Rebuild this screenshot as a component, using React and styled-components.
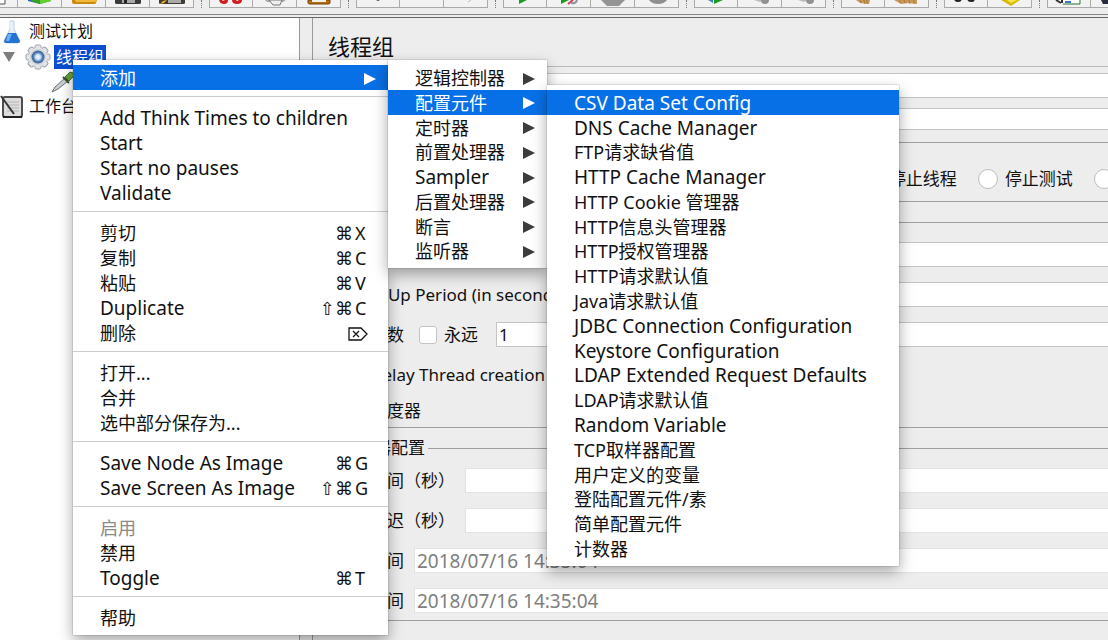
import React from "react";
import styled, { createGlobalStyle, css } from "styled-components";

const addItems = [
  "逻辑控制器",
  "配置元件",
  "定时器",
  "前置处理器",
  "Sampler",
  "后置处理器",
  "断言",
  "监听器",
];

const configItems = [
  "CSV Data Set Config",
  "DNS Cache Manager",
  "FTP请求缺省值",
  "HTTP Cache Manager",
  "HTTP Cookie 管理器",
  "HTTP信息头管理器",
  "HTTP授权管理器",
  "HTTP请求默认值",
  "Java请求默认值",
  "JDBC Connection Configuration",
  "Keystore Configuration",
  "LDAP Extended Request Defaults",
  "LDAP请求默认值",
  "Random Variable",
  "TCP取样器配置",
  "用户定义的变量",
  "登陆配置元件/素",
  "简单配置元件",
  "计数器",
];

const menuGroups = [
  [
    { label: "Add Think Times to children" },
    { label: "Start" },
    { label: "Start no pauses" },
    { label: "Validate" },
  ],
  [
    { label: "剪切", keys: "⌘", letter: "X" },
    { label: "复制", keys: "⌘", letter: "C" },
    { label: "粘贴", keys: "⌘", letter: "V" },
    { label: "Duplicate", keys: "⇧⌘", letter: "C" },
    { label: "删除", erase: true },
  ],
  [{ label: "打开..." }, { label: "合并" }, { label: "选中部分保存为..." }],
  [
    { label: "Save Node As Image", keys: "⌘", letter: "G" },
    { label: "Save Screen As Image", keys: "⇧⌘", letter: "G" },
  ],
  [
    { label: "启用", disabled: true },
    { label: "禁用" },
    { label: "Toggle", keys: "⌘", letter: "T" },
  ],
  [{ label: "帮助" }],
];

const tools = [
  ["new", "template", "open", "save", "saveAs"],
  ["cut", "copy", "paste"],
  ["expand", "collapse", "toggle"],
  ["start", "startNoPause", "stop", "shutdown"],
  ["remoteStart", "remoteStop", "remoteShutdown"],
  ["clear", "clearAll"],
  ["search", "searchReset"],
  ["functions", "help"],
];

const toolArt = {
  new: (
    <>
      <path d="M4 0h19v4H4z" fill="#fff" />
      <path d="M4 4h19V0" fill="none" stroke="#555" />
    </>
  ),
  template: (
    <>
      <path d="M2 0h12v4L2 1z" fill="#2463b8" />
      <path d="M5 0h20v1L14 4 5 1z" fill="#36a51c" />
      <path d="M14 0h11v1L14 4z" fill="#62cf35" />
    </>
  ),
  open: (
    <>
      <path d="M2 0h25l-1 3q0 1-2 1H4Q2 4 2 2z" fill="#c98a10" />
      <path d="M5 0h22l-1 2H6z" fill="#f0b93a" />
    </>
  ),
  save: (
    <>
      <path d="M1 0h26v3q0 1-2 1H3Q1 4 1 3z" fill="#3a3a3a" />
      <path d="M8 0h13v3H8z" fill="#a8a8a8" />
      <path d="M10 0h3v3h-3z" fill="#222" />
    </>
  ),
  saveAs: (
    <>
      <path d="M1 0h26v3q0 1-2 1H3Q1 4 1 3z" fill="#3f3a32" />
      <path d="M10 0h13v3H10z" fill="#aaa" />
      <path d="M2 4l3-3 4-1-3 3z" fill="#efb424" />
    </>
  ),
  cut: (
    <>
      <path d="M2 0h9q0 4-4 4T2 0zM15 0h10q0 4-5 4t-5-4z" fill="#d31c20" />
      <path d="M5 0h3L6 1zM19 0h3l-2 1z" fill="#fff" />
    </>
  ),
  copy: (
    <>
      <path d="M4 0h21l-3 2H6z" fill="#a9a9a9" />
      <path d="M8 0h13l-2 5h-7z" fill="#eee" stroke="#777" />
    </>
  ),
  paste: (
    <>
      <path d="M3 0h22v3q0 1-2 1H5Q3 4 3 3z" fill="#b56c13" stroke="#79450b" />
      <path d="M7 0h14v2H7z" fill="#f4f1e8" />
    </>
  ),
  expand: <path d="M12 0h4l-2 1z" fill="#345" />,
  collapse: null,
  toggle: <path d="M16 2l3-2" stroke="#bbb" />,
  start: <path d="M8 0h8L8 4z" fill="#1a9b22" />,
  startNoPause: (
    <>
      <path d="M6 0h8L6 4z" fill="#1a9b22" />
      <path d="M13 4l5-4" stroke="#cc3d56" strokeWidth="2" />
      <path d="M16 3q5 1 6-3" fill="none" stroke="#8a92a4" strokeWidth="2" />
    </>
  ),
  stop: <path d="M2 0h24l-6 6H8z" fill="#949494" />,
  shutdown: <path d="M6 0h18q-3 4-9 4T6 0z" fill="#8f8f8f" />,
  remoteStart: (
    <>
      <path d="M12 0h9l-9 4z" fill="#1a9b22" />
      <path d="M6 0l5 3V0z" fill="#4382b8" />
    </>
  ),
  remoteStop: (
    <>
      <path d="M8 0h10l-4 2z" fill="#bbb" />
      <circle cx="19" cy="0" r="4" fill="#929292" />
    </>
  ),
  remoteShutdown: (
    <>
      <path d="M8 0h10l-4 2z" fill="#bbb" />
      <circle cx="20" cy="0" r="4" fill="#929292" />
    </>
  ),
  clear: (
    <>
      <path d="M7 0h14l-1 4-9-1z" fill="#c9975a" />
      <path d="M11 0l1 3M15 0l1 4M18 0v4" stroke="#a87840" />
    </>
  ),
  clearAll: (
    <>
      <path d="M1 0h23v4l-8-1-8 1z" fill="#c9975a" />
      <path d="M6 0l2 3M11 0l1 3M16 0l1 4M21 0v4" stroke="#a87840" />
    </>
  ),
  search: (
    <path d="M3 0q3 2 6 0M16 0q4 2 6 0" fill="none" stroke="#222" strokeWidth="2" />
  ),
  searchReset: (
    <>
      <path d="M5 0h19l-9 6z" fill="#d9b90b" />
      <path d="M11 0h10l-6 3z" fill="#f8e64b" />
    </>
  ),
  functions: (
    <>
      <path d="M2 0h24v4H5z" fill="#fff" />
      <path d="M1 0l5 3M7 0v3" stroke="#333" strokeWidth="2" />
      <path d="M10 2h6" stroke="#2f78d4" strokeWidth="2" />
      <path d="M8 4h17V0" fill="none" stroke="#21702c" />
    </>
  ),
  help: <path d="M2 0h10v4H4z" fill="#262a3a" />,
};

const MenuArrow = () => (
  <svg width="12" height="12" viewBox="0 0 12 12" aria-hidden="true">
    <path d="M0 0l12 6-12 6z" fill="currentColor" />
  </svg>
);

const EraseIcon = () => (
  <svg width="20" height="14" viewBox="0 0 20 14" role="img" aria-label="Delete">
    <path
      d="M1 1h12l6 6-6 6H1zM5 4l6 6M11 4l-6 6"
      fill="none"
      stroke="currentColor"
      strokeWidth="1.3"
    />
  </svg>
);

const FlaskIcon = () => (
  <svg width="18" height="24" viewBox="0 0 18 24" aria-hidden="true">
    <path
      d="M7 1h4v8l6 12q0 2-2 2H3q-2 0-2-2L7 9z"
      fill="#e6eef7"
      stroke="#c3d0de"
    />
    <path d="M5 13h8l4 8q0 2-2 2H3q-2 0-2-2z" fill="#2473d2" />
    <path d="M5 14h4l-3 7H3z" fill="#6fb0f2" />
    <path d="M8 2v7" stroke="#fff" />
  </svg>
);

const GearIcon = () => (
  <svg width="26" height="26" viewBox="0 0 26 26" aria-hidden="true">
    <defs>
      <radialGradient id="hub">
        <stop offset="0" stopColor="#fff" />
        <stop offset="0.4" stopColor="#c5dcf2" />
        <stop offset="0.7" stopColor="#4f7fb8" />
        <stop offset="1" stopColor="#3d5f8e" />
      </radialGradient>
    </defs>
    {[0, 45, 90, 135].map((angle) => (
      <rect
        key={angle}
        x="10"
        y="1"
        width="6"
        height="24"
        rx="1.5"
        fill="#e3e5e8"
        stroke="#9b9fa5"
        strokeWidth="1"
        transform={`rotate(${angle} 13 13)`}
      />
    ))}
    <circle cx="13" cy="13" r="9.5" fill="#e3e5e8" />
    <circle cx="13" cy="13" r="8" fill="#d2d6db" />
    <circle cx="13" cy="13" r="6.5" fill="url(#hub)" />
  </svg>
);

const PipetteIcon = () => (
  <svg width="24" height="24" viewBox="0 0 24 24" aria-hidden="true">
    <path d="M1 22l3-5L14 8l3 3L7 19z" fill="#c9d0d4" stroke="#6a7277" />
    <path d="M12 7l6 6" stroke="#3c4a35" strokeWidth="2" />
    <path d="M14 7l5-5q4 0 4 4l-5 5z" fill="#69a33b" stroke="#426f22" />
  </svg>
);

const NotebookIcon = () => (
  <svg width="24" height="24" viewBox="0 0 24 24" aria-hidden="true">
    <rect x="3" y="2" width="19" height="20" rx="2" fill="#ddd" stroke="#4d4d4d" strokeWidth="2" />
    <path d="M7 7h12M7 10h12M7 13h12M7 16h12" stroke="#b5b5b5" />
    <path d="M1 1l13 18" stroke="#333" strokeWidth="2" />
    <path d="M3 22h19" stroke="#222" strokeWidth="2" />
  </svg>
);

const isLatin = (label) => /^[\x20-\x7e]+$/.test(label);

const MenuItem = ({
  label,
  keys,
  letter,
  erase,
  disabled,
  active,
  submenu,
  children,
}) => (
  <StyledItem role="none">
    <ItemButton
      type="button"
      role="menuitem"
      disabled={disabled}
      $active={active}
      $submenu={submenu}
    >
      <ItemLabel $latin={isLatin(label)}>{label}</ItemLabel>
      {submenu && <MenuArrow />}
      {keys && (
        <Shortcut>
          <span>{keys}</span>
          <ShortcutLetter>{letter}</ShortcutLetter>
        </Shortcut>
      )}
      {erase && <EraseIcon />}
    </ItemButton>
    {children}
  </StyledItem>
);

const ContextMenu = () => (
  <RootMenu role="menu">
    <MenuItem label="添加" active submenu>
      <SubMenu role="menu" $width={159} $height={208}>
        {addItems.map((item) => (
          <MenuItem
            key={item}
            label={item}
            active={item === "配置元件"}
            submenu
          >
            {item === "配置元件" && (
              <SubMenu role="menu" $width={352} $height={481}>
                {configItems.map((config, i) => (
                  <MenuItem key={config} label={config} active={i === 0} />
                ))}
              </SubMenu>
            )}
          </MenuItem>
        ))}
      </SubMenu>
    </MenuItem>
    {menuGroups.map((group, i) => (
      <React.Fragment key={i}>
        <Separator role="separator" />
        {group.map((item) => (
          <MenuItem key={item.label} {...item} />
        ))}
      </React.Fragment>
    ))}
  </RootMenu>
);

const ThreadGroup = () => (
  <Panel>
    <h1>线程组</h1>
    <NameSection>
      <Field>
        <label htmlFor="name">名称：</label>
        <TextInput id="name" defaultValue="线程组" />
      </Field>
      <Field>
        <label htmlFor="comment">注释：</label>
        <TextInput id="comment" $slim />
      </Field>
    </NameSection>
    <Groups>
      <Group>
        <legend>在取样器错误后要执行的动作</legend>
        <RadioRow>
          {["继续", "Start Next Thread Loop", "停止线程", "停止测试", "立即停止测试"].map(
            (action, i) => (
              <Choice key={action}>
                <Radio type="radio" name="action" defaultChecked={i === 0} />
                {action}
              </Choice>
            )
          )}
        </RadioRow>
      </Group>
      <Group $tight>
        <legend>线程属性</legend>
        <Fields>
          <Field>
            <label htmlFor="threads">线程数：</label>
            <TextInput id="threads" defaultValue="1" />
          </Field>
          <Field>
            <label htmlFor="ramp">Ramp-Up Period (in seconds):</label>
            <TextInput id="ramp" defaultValue="1" />
          </Field>
          <Field>
            <label htmlFor="loops">循环次数</label>
            <Forever>
              <Checkbox type="checkbox" />
              永远
            </Forever>
            <TextInput id="loops" defaultValue="1" />
          </Field>
        </Fields>
        <CheckList>
          <Choice>
            <Checkbox type="checkbox" />
            Delay Thread creation until needed
          </Choice>
          <Choice>
            <Checkbox type="checkbox" defaultChecked />
            调度器
          </Choice>
        </CheckList>
      </Group>
      <Group>
        <legend>调度器配置</legend>
        <Fields>
          <Field>
            <label htmlFor="duration">持续时间（秒）</label>
            <TextInput id="duration" $flat />
          </Field>
          <Field>
            <label htmlFor="delay">启动延迟（秒）</label>
            <TextInput id="delay" $flat />
          </Field>
          <Field>
            <label htmlFor="startTime">启动时间</label>
            <TextInput id="startTime" defaultValue="2018/07/16 14:35:04" $flat />
          </Field>
          <Field>
            <label htmlFor="endTime">结束时间</label>
            <TextInput id="endTime" defaultValue="2018/07/16 14:35:04" $flat />
          </Field>
        </Fields>
      </Group>
    </Groups>
  </Panel>
);

const App = () => {
  return (
    <>
      <GlobalStyle />
      <Window>
        <Toolbar>
          {tools.map((group, i) => (
            <ToolGroup key={i}>
              {group.map((tool) => (
                <ToolButton key={tool} type="button" aria-label={tool}>
                  <svg width="28" height="7" viewBox="0 0 28 7" aria-hidden="true">
                    {toolArt[tool]}
                  </svg>
                </ToolButton>
              ))}
            </ToolGroup>
          ))}
        </Toolbar>
        <Workspace>
          <Tree>
            <TreeRow $level={0}>
              <FlaskIcon />
              <span>测试计划</span>
            </TreeRow>
            <TreeRow $level={0}>
              <Expander width="12" height="10" viewBox="0 0 12 10" aria-hidden="true">
                <path d="M0 0h12L6 10z" fill="#7d7d7d" />
              </Expander>
              <GearIcon />
              <Selected>线程组</Selected>
            </TreeRow>
            <TreeRow $level={2}>
              <PipetteIcon />
            </TreeRow>
            <TreeRow $bench>
              <NotebookIcon />
              <span>工作台</span>
            </TreeRow>
          </Tree>
          <ThreadGroup />
        </Workspace>
        <ContextMenu />
      </Window>
    </>
  );
};

const GlobalStyle = createGlobalStyle`
  * {
    box-sizing: border-box;
  }
  body {
    margin: 0;
    overflow: hidden;
    background: #ededed;
    color: #111;
    font-family: "Noto Sans", "Noto Sans CJK SC", sans-serif;
    font-size: 17px;
  }
  button, input {
    font: inherit;
    color: inherit;
  }
  ul {
    list-style: none;
    margin: 0;
    padding: 0;
  }
`;

const Window = styled.div`
  position: relative;
  display: flex;
  flex-direction: column;
  min-height: 100vh;
  overflow: hidden;
`;

const Toolbar = styled.header`
  display: flex;
  margin-left: -26px;
  padding-bottom: 6px;
  border-bottom: 1px solid #888;
`;

const ToolGroup = styled.div`
  display: flex;
  flex: none;
  & + & {
    margin-left: 7px;
    padding-left: 7px;
    border-left: 1px dotted #777;
  }
`;

const ToolButton = styled.button`
  width: 44px;
  height: 8px;
  padding: 0;
  border: solid #aaa;
  border-width: 0 1px 1px 0;
  background: #f2f2f2;
  line-height: 0;
  &:first-child {
    box-shadow: inset 1px 0 #aaa;
  }
  svg {
    display: block;
    margin: 0 auto;
  }
`;

const Workspace = styled.main`
  display: grid;
  grid-template-columns: 300px minmax(0, 1fr);
  column-gap: 12px;
  flex: 1;
  margin-top: 2px;
  border-top: 1px solid #666;
`;

const Tree = styled.ul`
  && {
    padding-top: 1px;
  }
  border-right: 1px solid #999;
  background: #fff;
  font-size: 16px;
  line-height: 23px;
`;

const TreeRow = styled.li`
  display: flex;
  align-items: center;
  gap: 8px;
  height: 25px;
  padding-left: ${({ $level, $bench }) => ($bench ? 0 : 3 + $level * 24)}px;
  ${({ $bench }) =>
    $bench &&
    css`
      gap: 5px;
    `}
`;

const Expander = styled.svg`
  margin-right: 2px;
`;

const Selected = styled.span`
  margin-left: -5px;
  padding: 0 2px;
  background: #0b4fd0;
  color: #fff;
  line-height: 24px;
`;

const Panel = styled.section`
  overflow: hidden;
  padding-left: 15px;
  border-left: 1px solid #999;
  h1 {
    margin: 0;
    padding: 9px 0 1px;
    font-size: 22px;
    font-weight: 400;
    line-height: 38px;
  }
`;

const NameSection = styled.div`
  display: flex;
  flex-direction: column;
  gap: 10px;
  margin-right: -24px;
  padding: 6px 8px 2px;
  border-top: 1px solid #bbb;
`;

const Groups = styled.form`
  display: flex;
  flex-direction: column;
  gap: 10px;
  margin-right: -24px;
`;

const Group = styled.fieldset`
  min-width: 0;
  margin: 0;
  padding: 10px 7px ${({ $tight }) => ($tight ? 4 : 7)}px;
  border: 1px solid #a0a0a0;
  legend {
    margin-left: 1px;
    padding: 0 3px;
    line-height: 20px;
  }
`;

const Fields = styled.div`
  display: flex;
  flex-direction: column;
  gap: 15px;
`;

const Field = styled.div`
  display: flex;
  align-items: center;
  gap: 10px;
  line-height: 22px;
  white-space: nowrap;
`;

const TextInput = styled.input`
  flex: 1;
  min-width: 0;
  height: ${({ $slim }) => ($slim ? 22 : 25)}px;
  padding: 0 2px;
  border: 1px solid #c4c4c4;
  background: #fff;
  ${({ $flat }) =>
    $flat &&
    css`
      border-color: #e2e2e2;
      color: #808080;
      font-size: 19px;
    `}
`;

const Choice = styled.label`
  display: flex;
  align-items: center;
  gap: 7px;
  white-space: nowrap;
  line-height: 24px;
`;

const Forever = styled(Choice)`
  margin: 0 8px 0 2px;
  line-height: 22px;
`;

const RadioRow = styled.div`
  display: flex;
  gap: 21px;
  padding: 5px 0 3px 211px;
`;

const Radio = styled.input`
  appearance: none;
  width: 20px;
  height: 20px;
  margin: 0;
  border: 1px solid #bdbdbd;
  border-radius: 50%;
  background: #fff;
`;

const Checkbox = styled.input`
  appearance: none;
  width: 18px;
  height: 18px;
  margin: 0 0 0 3px;
  border: 1px solid #c4c4c4;
  border-radius: 3px;
  background: #fff;
`;

const CheckList = styled.div`
  display: flex;
  flex-direction: column;
  gap: 12px;
  margin-top: 16px;
  padding-left: 6px;
`;

const Menu = styled.ul`
  position: absolute;
  && {
    padding: 5px 0;
  }
  background: #fff;
  box-shadow: 0 0 1px rgba(0, 0, 0, 0.5), 0 6px 14px rgba(0, 0, 0, 0.35);
  font-size: 18px;
`;

const RootMenu = styled(Menu)`
  top: 60px;
  left: 73px;
  width: 315px;
`;

const SubMenu = styled(Menu)`
  display: grid;
  grid-auto-rows: 1fr;
  top: -5px;
  left: 100%;
  width: ${({ $width }) => $width}px;
  height: ${({ $height }) => $height}px;
`;

const StyledItem = styled.li`
  position: relative;
  min-height: 0;
`;

const ItemButton = styled.button`
  display: flex;
  align-items: center;
  justify-content: space-between;
  width: 100%;
  height: 25px;
  padding: 2px 20px 0 27px;
  border: 0;
  background: ${({ $active }) => ($active ? "#0870e6" : "transparent")};
  color: ${({ $active }) => ($active ? "#fff" : "#111")};
  line-height: 23px;
  text-align: left;
  white-space: nowrap;
  ${({ $submenu, $active }) =>
    $submenu &&
    css`
      padding-right: 12px;
      svg {
        color: ${$active ? "#fff" : "#3c3c3c"};
      }
    `}
  &:disabled {
    color: #8a8a8a;
  }
`;

const ItemLabel = styled.span`
  font-size: ${({ $latin }) => ($latin ? 19 : 18)}px;
`;

const Shortcut = styled.kbd`
  display: flex;
  gap: 2px;
  font-family: "Noto Sans", "DejaVu Sans", sans-serif;
`;

const ShortcutLetter = styled.span`
  width: 13px;
`;

const Separator = styled.li`
  height: 15px;
  padding-top: 6px;
  &::before {
    content: "";
    display: block;
    border-top: 1px solid #ccc;
  }
`;

export default App;
